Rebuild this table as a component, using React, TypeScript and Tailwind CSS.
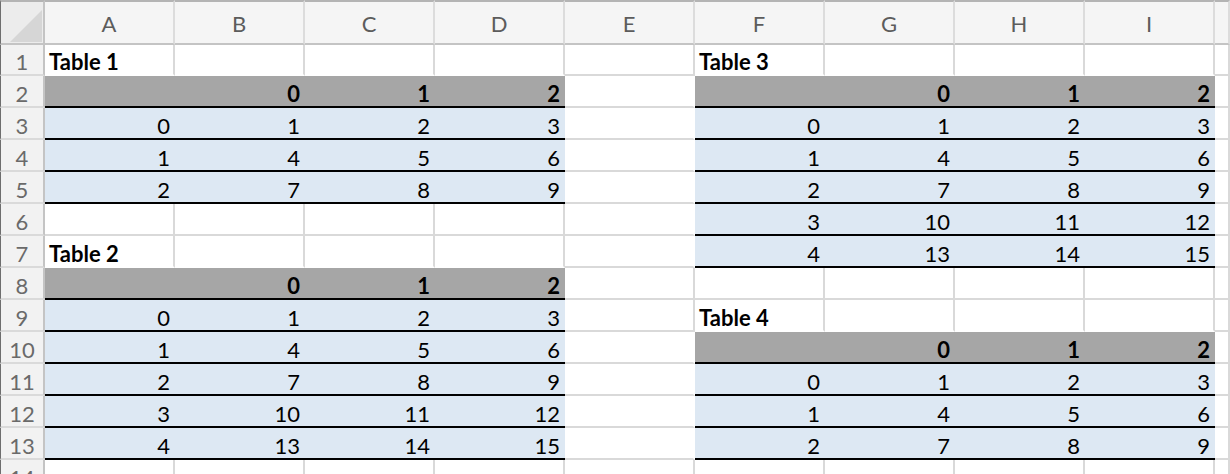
import React from "react";

type Kind = "title" | "head" | "data";
type Cell = { text: string; kind: Kind };

const COLS = ["A", "B", "C", "D", "E", "F", "G", "H", "I", ""];
const ROWS = Array.from({ length: 14 }, (_, i) => i + 1);

const cells = new Map<string, Cell>();
const key = (c: number, r: number) => `${c}-${r}`;

function addTable(c0: number, r0: number, title: string, n: number) {
  cells.set(key(c0, r0), { text: title, kind: "title" });
  const hdr = ["", "0", "1", "2"];
  hdr.forEach((t, i) => cells.set(key(c0 + i, r0 + 1), { text: t, kind: "head" }));
  for (let i = 0; i < n; i++) {
    cells.set(key(c0, r0 + 2 + i), { text: String(i), kind: "data" });
    for (let j = 0; j < 3; j++) {
      cells.set(key(c0 + 1 + j, r0 + 2 + i), { text: String(3 * i + j + 1), kind: "data" });
    }
  }
}

addTable(0, 1, "Table 1", 3);
addTable(0, 7, "Table 2", 5);
addTable(5, 1, "Table 3", 5);
addTable(5, 9, "Table 4", 3);

const isFilled = (c: number, r: number) => {
  const x = cells.get(key(c, r));
  return !!x && (x.kind === "head" || x.kind === "data");
};

function BodyCell({ c, r }: { c: number; r: number }) {
  const cell = cells.get(key(c, r));
  if (cell && cell.kind === "head") {
    return (
      <div className="flex items-end justify-end bg-[#a6a6a6] border-b-2 border-b-black pr-[5px] font-bold text-black">
        {cell.text}
      </div>
    );
  }
  if (cell && cell.kind === "data") {
    return (
      <div className="flex items-end justify-end bg-[#dde8f3] border-b-2 border-b-black pr-[5px] text-black">
        {cell.text}
      </div>
    );
  }
  const rightFilled = isFilled(c + 1, r);
  const belowFilled = isFilled(c, r + 1);
  const rCls = rightFilled ? "border-r-white" : "border-r-[#d9d9d9]";
  const bCls = belowFilled ? "border-b-white" : "border-b-[#d9d9d9]";
  return (
    <div
      className={`flex items-end justify-start bg-white border-r-2 border-b-2 ${rCls} ${bCls} pl-[4px] whitespace-nowrap font-bold text-black`}
    >
      {cell ? cell.text : ""}
    </div>
  );
}

export default function App() {
  return (
    <div className="h-[474px] w-[1230px] overflow-hidden bg-white font-[family-name:Lato,sans-serif] text-[22px] leading-[25px]">
      <div className="grid grid-cols-[45px_repeat(9,130px)_1fr] grid-rows-[45px_31px_repeat(13,32px)]">
        {/* corner */}
        <div className="relative border-t-2 border-l border-r-2 border-b-2 border-t-[#b4b4b4] border-l-[#6e6e6e] border-r-[#c4c4c4] border-b-[#c4c4c4] bg-[#ececec]">
          <svg className="absolute left-[9px] top-[8px]" width="32" height="32" viewBox="0 0 32 32">
            <polygon points="0,32 32,0 32,32" fill="#d6d6d6" />
          </svg>
        </div>
        {COLS.map((l, i) => (
          <div
            key={`h${i}`}
            className="flex items-start justify-center pt-[9px] bg-[#f5f5f5] border-t-2 border-r-2 border-b-2 border-t-[#b4b4b4] border-r-[#dcdcdc] border-b-[#c4c4c4] text-[#5c5c5c]"
          >
            {l}
          </div>
        ))}
        {ROWS.map((r) => (
          <React.Fragment key={`r${r}`}>
            <div className="flex items-end justify-center bg-[#f2f2f2] border-l border-r-2 border-b-2 border-l-[#6e6e6e] border-r-[#c4c4c4] border-b-[#dadada] text-[#6a6a6a]">
              {r}
            </div>
            {COLS.map((_, c) => (
              <BodyCell key={`c${c}-${r}`} c={c} r={r} />
            ))}
          </React.Fragment>
        ))}
      </div>
    </div>
  );
}
